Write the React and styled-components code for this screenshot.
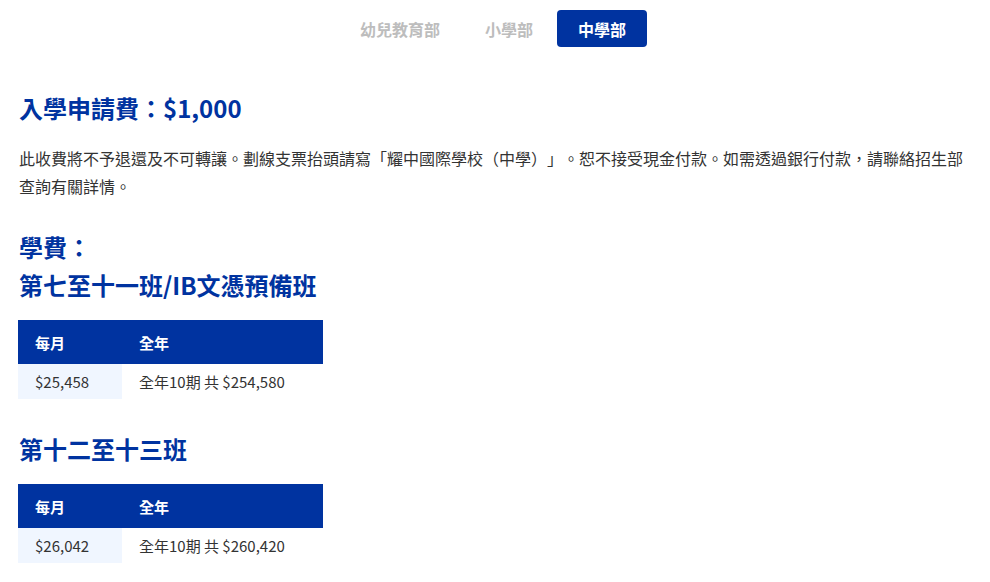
import styled, { createGlobalStyle } from "styled-components";

const GlobalStyle = createGlobalStyle`
  body {
    margin: 0;
    background: #ffffff;
    font-family: "Noto Sans CJK TC", "Noto Sans", sans-serif;
    color: #333333;
    text-spacing-trim: space-all;
  }
`;

const tabs = ["幼兒教育部", "小學部", "中學部"];

const fees = [
  { title: ["學費：", "第七至十一班/IB文憑預備班"], monthly: "$25,458", yearly: "全年10期 共 $254,580" },
  { title: ["第十二至十三班"], monthly: "$26,042", yearly: "全年10期 共 $260,420" }
];

const App = () => {
  return (
    <Page>
      <GlobalStyle />
      <TabBar>
        {tabs.map(tab => (
          <Tab key={tab} active={tab === "中學部"}>
            {tab}
          </Tab>
        ))}
      </TabBar>

      <Content>
        <Heading>入學申請費：$1,000</Heading>
        <Note>
          此收費將不予退還及不可轉讓。劃線支票抬頭請寫「耀中國際學校（中學）」。恕不接受現金付款。如需透過銀行付款，請聯絡招生部查詢有關詳情。
        </Note>

        {fees.map((fee, i) => (
          <Section key={i} first={i === 0}>
            <Heading>
              {fee.title.map(line => (
                <div key={line}>{line}</div>
              ))}
            </Heading>
            <FeeTable>
              <thead>
                <tr>
                  <HeadCell wide={false}>每月</HeadCell>
                  <HeadCell wide>全年</HeadCell>
                </tr>
              </thead>
              <tbody>
                <tr>
                  <Cell shaded>{fee.monthly}</Cell>
                  <Cell>{fee.yearly}</Cell>
                </tr>
              </tbody>
            </FeeTable>
          </Section>
        ))}
      </Content>
    </Page>
  );
};

const Page = styled.div`
  width: 990px;
`;

const TabBar = styled.div`
  display: flex;
  justify-content: center;
  gap: 3px;
  padding: 10px 4px 0 0;
`;

const Tab = styled.button`
  height: 37px;
  padding: 0 21px;
  border: none;
  border-radius: 4px;
  font-family: inherit;
  font-size: 16px;
  font-weight: 600;
  cursor: pointer;
  background-color: ${({ active }) => (active ? "#0033a0" : "transparent")};
  color: ${({ active }) => (active ? "#ffffff" : "#bdbdbd")};
`;

const Content = styled.div`
  padding: 42px 19px 0;
`;

const Heading = styled.h2`
  margin: 0;
  font-size: 24px;
  line-height: 38px;
  font-weight: 600;
  color: #0033a0;
`;

const Note = styled.p`
  margin: 17px 0 0;
  font-size: 16px;
  line-height: 28px;
  color: #333333;
`;

const Section = styled.section`
  margin-top: ${({ first }) => (first ? "28px" : "31px")};
`;

const FeeTable = styled.table`
  margin: 16px 0 0 -1px;
  width: 305px;
  border-collapse: collapse;
`;

const HeadCell = styled.th`
  width: ${({ wide }) => (wide ? "201px" : "104px")};
  height: 44px;
  padding: 0 0 0 17px;
  box-sizing: border-box;
  background-color: #0033a0;
  color: #ffffff;
  font-size: 15px;
  font-weight: 600;
  text-align: left;
`;

const Cell = styled.td`
  height: 35px;
  padding: 0 0 0 17px;
  box-sizing: border-box;
  background-color: ${({ shaded }) => (shaded ? "#f0f6ff" : "#ffffff")};
  font-size: 15px;
  color: #333333;
`;

export default App;
